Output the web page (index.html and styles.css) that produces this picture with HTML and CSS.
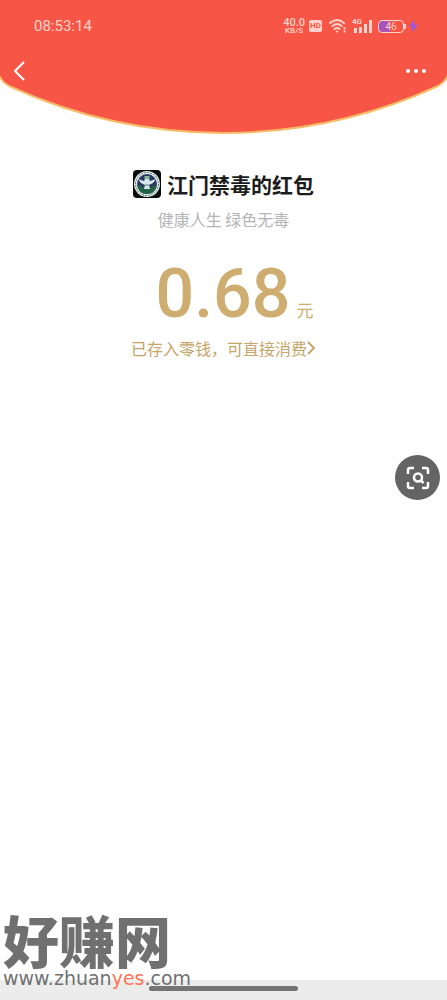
FILE: index.html
```html
<!DOCTYPE html>
<html lang="zh-CN">
<head>
    <meta charset="UTF-8">
    <meta name="viewport" content="width=device-width, initial-scale=1.0">
    <link rel="stylesheet" href="styles.css">
    <title>红包详情</title>
</head>
<body>
    <header class="header">
        <svg class="curve" viewBox="0 0 447 136" preserveAspectRatio="none" aria-hidden="true">
            <path d="M-2 -2V72Q0 81 9 86A514 514 0 0 0 438 86Q447 81 449 72V-2Z" fill="#f75646" stroke="#f8bc68" stroke-width="2"/>
        </svg>
        <div class="status">
            <span class="time">08:53:14</span>
            <div class="status-icons">
                <div class="speed"><span class="speed-value">40.0</span><span class="speed-unit">KB/S</span></div>
                <span class="hd">HD</span>
                <svg class="wifi" width="18" height="16" viewBox="0 0 18 16" fill="none" stroke="#ffd3cb" stroke-width="2" stroke-linecap="round">
                    <path d="M1 5Q8 -1 15 5M3.5 8Q8 4 12.500 8M5.500 11Q8 9 10.500 11"/>
                    <path d="M8 13.500V13.600M15.500 10V10.500M15.500 13.200V13.500"/>
                </svg>
                <div class="signal">
                    <span class="network">4G</span>
                    <svg width="20" height="16" viewBox="0 0 20 16" fill="#ffd3cb">
                        <path d="M2 10h3v5h-3zM7 9h3v6h-3zM12 6h3v9h-3zM17 2h3v13h-3z"/>
                    </svg>
                </div>
                <div class="battery">46</div>
                <svg class="bolt" width="9" height="12" viewBox="0 0 9 12" fill="#9958df">
                    <path d="M5 0L0 6.500H3V12L9 5H5.500Z"/>
                </svg>
            </div>
        </div>
        <nav class="nav">
            <button class="icon-button" aria-label="返回">
                <svg width="12" height="20" viewBox="0 0 12 20" fill="none" stroke="#fff" stroke-width="2">
                    <path d="M10 1L1 10L10 19"/>
                </svg>
            </button>
            <button class="icon-button" aria-label="更多">
                <svg width="20" height="6" viewBox="0 0 20 6" fill="#fff">
                    <circle cx="2" cy="3" r="2"/><circle cx="10" cy="3" r="2"/><circle cx="18" cy="3" r="2"/>
                </svg>
            </button>
        </nav>
    </header>

    <main class="content">
        <h1 class="sender">
            <svg class="avatar" width="28" height="28" viewBox="0 0 28 28" aria-hidden="true">
                <rect width="28" height="28" rx="4" fill="#080b0b"/>
                <circle cx="14" cy="14" r="13" fill="#e8eeee"/>
                <circle cx="14" cy="14" r="11.500" fill="none" stroke="#527568" stroke-width="1" stroke-dasharray="2 1"/>
                <circle cx="14" cy="14" r="10" fill="#293963"/>
                <path d="M4 14Q14 21 24 14Q23 24 14 24Q5 24 4 14Z" fill="#246247"/>
                <path d="M5 9L11 11Q12 8 14 8Q16 8 17 11L23 9L20 13L16 15L17 19H11L12 15L8 13Z" fill="#d9e6ed"/>
                <path d="M11.500 6h5v3h-5zM12 14h4v2h-4z" fill="#90b7a0"/>
            </svg>
            <span>江门禁毒的红包</span>
        </h1>
        <p class="greeting">健康人生 绿色无毒</p>
        <div class="amount"><span class="number">0.68</span><span class="unit">元</span></div>
        <a class="balance" href="#">已存入零钱，可直接消费<svg width="9" height="14" viewBox="0 0 9 14" fill="none" stroke="currentColor" stroke-width="2">
                <path d="M1 1L7 7L1 13"/>
            </svg></a>
    </main>

    <button class="scan" aria-label="识图">
        <svg width="24" height="24" viewBox="0 0 24 24" fill="none" stroke="#fff" stroke-width="2.500">
            <path d="M2 8V4Q2 2 4 2H8M16 2H20Q22 2 22 4V8M22 16V20Q22 22 20 22H16M8 22H4Q2 22 2 20V16"/>
            <circle cx="12" cy="11.500" r="4"/>
            <path d="M14.500 14L17.500 17"/>
        </svg>
    </button>

    <footer class="gesture-bar"><span class="handle"></span></footer>

    <div class="watermark">
        <span class="site-name">好赚网</span>
        <span class="site-url">www.zhuan<span class="accent">yes</span>.com</span>
    </div>
</body>
</html>
```
FILE: styles.css
```css
* {
    box-sizing: border-box;
}

body {
    position: relative;
    display: flex;
    flex-direction: column;
    min-height: 100vh;
    margin: 0;
    background-color: #fff;
    font-family: "Noto Sans CJK SC", sans-serif;
}

button {
    padding: 0;
    border: 0;
    cursor: pointer;
}

svg {
    display: block;
    flex: none;
}

.header {
    position: relative;
    height: 136px;
}

/* red cover behind the status and navigation rows */
.curve {
    position: absolute;
    top: 0;
    left: 0;
    width: 100%;
    height: 136px;
    z-index: -1;
}

.status {
    display: flex;
    justify-content: space-between;
    align-items: center;
    height: 52px;
    padding: 0 29px 0 34px;
    color: #ffd3cb;
    font-family: Roboto, sans-serif;
}

.time {
    font-size: 15px;
}

.status-icons {
    display: flex;
    align-items: center;
}

.speed {
    display: flex;
    flex-direction: column;
    align-items: center;
    margin-right: 4px;
    font-weight: 500;
}

.speed-value {
    font-size: 11px;
    line-height: 9px;
}

.speed-unit {
    font-size: 8px;
    line-height: 8px;
}

.hd {
    width: 13px;
    margin-right: 7px;
    border-radius: 2px;
    background-color: #ffd3cb;
    color: #f75646;
    font-size: 8px;
    font-weight: 700;
    line-height: 12px;
    text-align: center;
}

.wifi {
    margin-right: 5px;
}

.signal {
    position: relative;
    margin-right: 6px;
}

.network {
    position: absolute;
    top: -1px;
    left: 0;
    font-size: 8px;
    font-weight: 700;
    line-height: 10px;
}

.battery {
    position: relative;
    width: 26px;
    margin-right: 5px;
    border: 1px solid #ffd3cb;
    border-radius: 4px;
    background: linear-gradient(90deg, #a954b5 46%, transparent 46%);
    font-size: 10px;
    line-height: 11px;
    text-align: center;
}

.battery::after {
    content: "";
    position: absolute;
    top: 3px;
    right: -3px;
    width: 2px;
    height: 5px;
    background-color: #ffd3cb;
}

.nav {
    display: flex;
    justify-content: space-between;
    align-items: center;
    height: 38px;
    padding: 0 16px 0 8px;
}

.icon-button {
    display: flex;
    justify-content: center;
    align-items: center;
    width: 24px;
    height: 32px;
    background: none;
}

.nav .icon-button:last-child {
    width: 30px;
}

.content {
    display: flex;
    flex: 1;
    flex-direction: column;
    align-items: center;
    padding-top: 32px;
}

.sender {
    display: flex;
    align-items: center;
    gap: 6px;
    margin: 0;
    color: #1c1c1c;
    font-size: 21px;
    font-weight: 700;
    line-height: 32px;
}

.greeting {
    margin: 7px 0 0;
    color: #b5b5b5;
    font-size: 16px;
    line-height: 24px;
}

.amount {
    display: flex;
    align-items: baseline;
    gap: 6px;
    margin-top: 21px;
    padding-left: 22px;
    color: #cfad70;
}

.number {
    font-family: Roboto, sans-serif;
    font-size: 68px;
    font-weight: 500;
    line-height: 84px;
}

.unit {
    font-size: 17px;
    line-height: 24px;
}

.balance {
    display: flex;
    align-items: center;
    color: #c6a568;
    font-size: 16px;
    line-height: 24px;
    text-decoration: none;
}

/* floats over the page at the right edge */
.scan {
    position: absolute;
    top: 455px;
    right: 7px;
    display: flex;
    justify-content: center;
    align-items: center;
    width: 45px;
    height: 45px;
    border-radius: 50%;
    background-color: #646464;
}

.gesture-bar {
    display: flex;
    justify-content: center;
    height: 20px;
    padding-top: 6px;
    background-color: #ececec;
}

.handle {
    width: 33.333%;
    height: 5px;
    border-radius: 3px;
    background-color: #747474;
}

.watermark {
    position: absolute;
    bottom: 14px;
    left: 3px;
    display: flex;
    flex-direction: column;
    color: #707070;
}

.site-name {
    margin-bottom: 3px;
    font-size: 56px;
    font-weight: 900;
    line-height: 56px;
}

.site-url {
    font-family: "DejaVu Sans", sans-serif;
    font-size: 19px;
    line-height: 16px;
}

.accent {
    color: #ff7557;
}
```
